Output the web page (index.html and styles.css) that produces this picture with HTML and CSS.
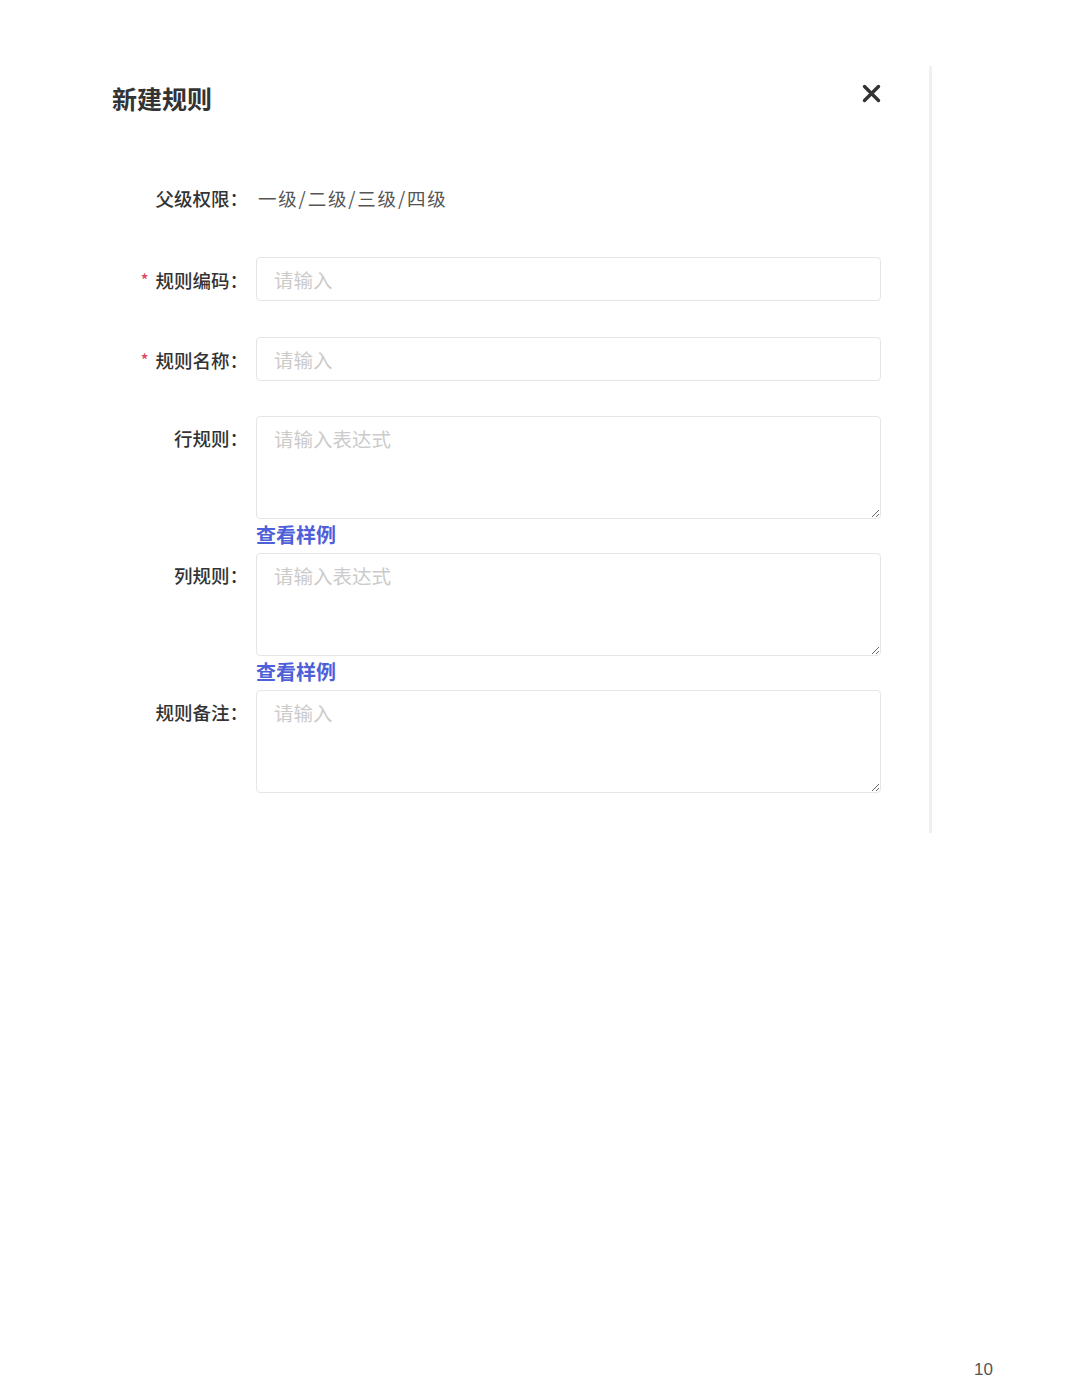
FILE: index.html
```html
<!DOCTYPE html>
<html lang="zh-CN">
<head>
    <meta charset="UTF-8">
    <meta name="viewport" content="width=device-width, initial-scale=1.0">
    <title>新建规则</title>
    <link rel="stylesheet" href="styles.css">
</head>
<body>
    <div class="rule-panel">
        <div class="panel-header">
            <h2 class="panel-title">新建规则</h2>
            <span class="close-btn">
                <svg width="19" height="19" viewBox="0 0 19 19" xmlns="http://www.w3.org/2000/svg">
                    <path d="M2.5 2.5L16.5 16.5M16.5 2.5L2.5 16.5" stroke="#333" stroke-width="3.4" stroke-linecap="round"/>
                </svg>
            </span>
        </div>

        <div class="rule-form">
            <div class="form-row row-text">
                <label class="form-label">父级权限：</label>
                <div class="form-field">
                    <span class="form-value">一级/二级/三级/四级</span>
                </div>
            </div>

            <div class="form-row">
                <label class="form-label"><span class="required">*</span>规则编码：</label>
                <div class="form-field">
                    <input class="form-input" type="text" placeholder="请输入">
                </div>
            </div>

            <div class="form-row">
                <label class="form-label"><span class="required">*</span>规则名称：</label>
                <div class="form-field">
                    <input class="form-input" type="text" placeholder="请输入">
                </div>
            </div>

            <div class="form-row row-area">
                <label class="form-label">行规则：</label>
                <div class="form-field">
                    <textarea class="form-textarea" placeholder="请输入表达式"></textarea>
                    <a href="#" class="sample-link">查看样例</a>
                </div>
            </div>

            <div class="form-row row-tight">
                <label class="form-label">列规则：</label>
                <div class="form-field">
                    <textarea class="form-textarea" placeholder="请输入表达式"></textarea>
                    <a href="#" class="sample-link">查看样例</a>
                </div>
            </div>

            <div class="form-row row-tight">
                <label class="form-label">规则备注：</label>
                <div class="form-field">
                    <textarea class="form-textarea" placeholder="请输入"></textarea>
                </div>
            </div>
        </div>
    </div>

    <div class="page-number">10</div>
</body>
</html>
```

FILE: styles.css
```css
* {
    margin: 0;
    padding: 0;
    box-sizing: border-box;
}

body {
    background: #fff;
    width: 1080px;
    height: 1397px;
    overflow: hidden;
    display: flex;
    flex-direction: column;
    font-family: "Noto Sans CJK SC", "Noto Sans", sans-serif;
    color: #333;
}

.rule-panel {
    width: 932px;
    margin-top: 66px;
    padding: 0 48px 40px 112px;
    border-right: 3px solid #f0f0f0;
}

.panel-header {
    display: flex;
    justify-content: space-between;
    align-items: flex-start;
}

.panel-title {
    font-size: 25px;
    line-height: 34px;
    font-weight: 700;
    color: #333;
    padding-top: 15px;
}

.close-btn {
    display: block;
    width: 19px;
    height: 19px;
    margin-top: 18px;
    cursor: pointer;
}

.close-btn svg {
    display: block;
}

.rule-form {
    margin-top: 71px;
}

.form-row {
    display: flex;
    gap: 8px;
    margin-top: 35px;
}

.form-row.row-text {
    margin-top: 0;
}

.form-row.row-text + .form-row {
    margin-top: 47px;
}

.form-row.row-area {
    margin-top: 34px;
}

.form-row.row-tight {
    margin-top: 6px;
}

.form-label {
    width: 136px;
    flex-shrink: 0;
    text-align: right;
    font-size: 18.5px;
    line-height: 44px;
    font-weight: 500;
    color: #333;
    white-space: nowrap;
}

.row-text .form-label {
    line-height: 24px;
}

.required {
    color: #e0475a;
    font-size: 16px;
    margin-right: 7px;
    vertical-align: 2px;
}

.form-field {
    flex: 1;
    display: flex;
    flex-direction: column;
}

.form-value {
    font-size: 18.5px;
    line-height: 24px;
    letter-spacing: 1.8px;
    color: #555;
    padding-left: 2px;
}

.form-input,
.form-textarea {
    width: 100%;
    border: 1px solid #e6e6e6;
    border-radius: 4px;
    font-family: inherit;
    font-size: 19.5px;
    line-height: 24px;
    color: #333;
    padding: 9px 17px;
    outline: none;
    background: #fff;
}

.form-input {
    height: 44px;
}

.form-textarea {
    height: 103px;
    padding-top: 10px;
    resize: vertical;
    display: block;
}

.form-input::placeholder,
.form-textarea::placeholder {
    color: #cbcbcb;
}

.sample-link {
    align-self: flex-start;
    margin-top: 4px;
    font-size: 20px;
    line-height: 24px;
    font-weight: 700;
    color: #4d60d8;
    text-decoration: none;
}

.page-number {
    margin-top: auto;
    padding: 0 87px 17px 0;
    text-align: right;
    font-family: "Liberation Sans", Arial, sans-serif;
    font-size: 17px;
    line-height: 20px;
    color: #555;
}
```
